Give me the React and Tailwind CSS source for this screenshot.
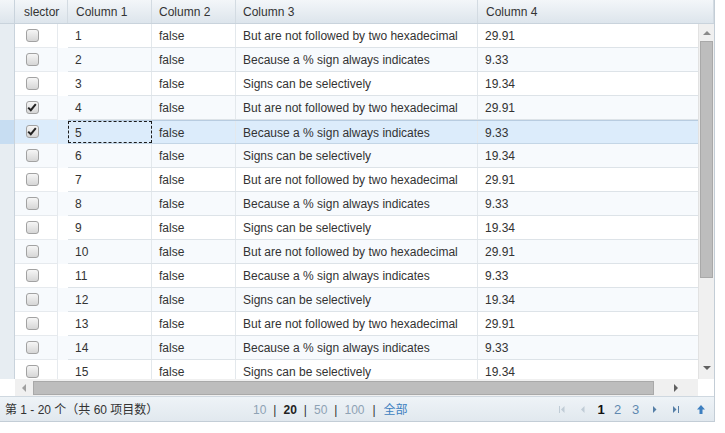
import React from "react";

const texts = [
  "But are not followed by two hexadecimal",
  "Because a % sign always indicates",
  "Signs can be selectively",
];
const nums = ["29.91", "9.33", "19.34"];

function Checkbox({ checked }) {
  return (
    <div className="w-[13px] h-[13px] rounded-[3px] border border-[#a2a2a2] bg-gradient-to-b from-[#f6f6f6] to-[#d6d6d6] flex items-center justify-center">
      {checked && (
        <svg width="10" height="9" viewBox="0 0 10 9">
          <path d="M1.2 4.6 L3.8 7.2 L8.8 1.2" fill="none" stroke="#222" strokeWidth="2" />
        </svg>
      )}
    </div>
  );
}

function Tri({ dir, color = "#7a7a7a", size = 4 }) {
  const s = size;
  let pts;
  if (dir === "up") pts = `0,${s} ${s},0 ${2 * s},${s}`;
  if (dir === "down") pts = `0,0 ${2 * s},0 ${s},${s}`;
  if (dir === "left") pts = `${s},0 ${s},${2 * s} 0,${s}`;
  if (dir === "right") pts = `0,0 0,${2 * s} ${s},${s}`;
  const w = dir === "up" || dir === "down" ? 2 * s : s;
  const h = dir === "up" || dir === "down" ? s : 2 * s;
  return (
    <svg width={w} height={h} viewBox={`0 0 ${w} ${h}`}>
      <polygon points={pts} fill={color} />
    </svg>
  );
}

export default function App() {
  const rows = Array.from({ length: 15 }, (_, i) => i + 1);
  return (
    <div
      className="w-[715px] h-[422px] bg-white text-[12px] text-[#333] flex flex-col border-r border-b border-[#c3cdd6] overflow-hidden"
      style={{ fontFamily: '"Liberation Sans", Arial, "Noto Sans CJK SC", sans-serif' }}
    >
      {/* header */}
      <div className="flex h-[24px] shrink-0 bg-gradient-to-b from-[#f3f6f9] to-[#dde5ec] border-b border-[#c9d3dc]">
        <div className="w-[15px] border-r border-[#c9d3dc]" />
        <div className="w-[53px] pl-[9px] pt-px flex items-center border-r border-[#d3dbe2]">slector</div>
        <div className="w-[84px] pl-[8px] pt-px flex items-center border-r border-[#d3dbe2]">Column 1</div>
        <div className="w-[84px] pl-[7px] pt-px flex items-center border-r border-[#d3dbe2]">Column 2</div>
        <div className="w-[242px] pl-[7px] pt-px flex items-center border-r border-[#d3dbe2]">Column 3</div>
        <div className="flex-1 pl-[8px] pt-px flex items-center border-r border-[#d3dbe2]">Column 4</div>
      </div>

      {/* body */}
      <div className="flex h-[355px] shrink-0 overflow-hidden">
        <div className="flex-1 flex flex-col overflow-hidden">
          {rows.map((n) => {
            const idx = (n - 1) % 3;
            const sel = n === 5;
            const even = n % 2 === 0;
            const rowBg = sel ? "bg-[#dcecfb]" : even ? "bg-[#f7fafd]" : "bg-white";
            return (
              <div key={n} className={`flex h-[24px] shrink-0 ${rowBg}`}>
                <div
                  className={`w-[15px] shrink-0 border-r border-[#c9d3dc] ${
                    sel ? "bg-[#c7ddf2]" : "bg-[#e7edf2]"
                  }`}
                />
                <div className="w-[43px] shrink-0 flex items-center justify-center pr-[8px] border-r border-b border-[#e6eaee]">
                  <Checkbox checked={n === 4 || n === 5} />
                </div>
                <div className="w-[10px] shrink-0" />
                <div
                  className={`flex flex-1 border-b ${
                    sel ? "border-[#c4d6e6] border-t border-t-[#b8cce0]" : "border-[#dde3e8]"
                  }`}
                >
                  <div
                    className={
                      sel
                        ? "w-[84px] shrink-0 pl-[6px] pt-px flex items-center border border-dashed border-[#1a1a1a]"
                        : "w-[84px] shrink-0 pl-[7px] pt-px flex items-center border-r border-[#e3e8ec]"
                    }
                  >
                    {n}
                  </div>
                  <div className="w-[84px] shrink-0 pl-[7px] pt-px flex items-center border-r border-[#e3e8ec]">false</div>
                  <div className="w-[242px] shrink-0 pl-[7px] pt-px flex items-center border-r border-[#e3e8ec]">
                    {texts[idx]}
                  </div>
                  <div className="flex-1 pl-[7px] pt-px flex items-center">{nums[idx]}</div>
                </div>
              </div>
            );
          })}
        </div>
        {/* vertical scrollbar */}
        <div className="w-[16px] shrink-0 bg-[#f0f0f0] border-l border-[#e2e2e2] flex flex-col items-center">
          <div className="h-[17px] flex items-center justify-center">
            <Tri dir="up" size={4} color="#8a8a8a" />
          </div>
          <div className="w-[13px] h-[237px] bg-[#bdbdbd] border border-[#a9a9a9]" />
          <div className="flex-1" />
          <div className="h-[17px] flex items-center justify-center mb-[3px]">
            <Tri dir="down" size={4} color="#606060" />
          </div>
        </div>
      </div>

      {/* horizontal scrollbar */}
      <div className="flex h-[17px] shrink-0">
        <div className="w-[15px] shrink-0 bg-white" />
        <div className="flex-1 bg-[#f0f0f0] flex items-center">
          <div className="w-[18px] flex items-center justify-center">
            <Tri dir="left" size={4} color="#a0a0a0" />
          </div>
          <div className="w-[621px] h-[14px] bg-[#bdbdbd] border border-[#a9a9a9]" />
          <div className="flex-1 flex items-center justify-center">
            <Tri dir="right" size={4} color="#606060" />
          </div>
        </div>
        <div className="w-[16px] shrink-0 bg-white" />
      </div>

      {/* footer */}
      <div className="flex items-center h-[26px] shrink-0 bg-gradient-to-b from-[#eef3f7] to-[#e1e8ee] border-t border-[#cfd8e0]">
        <div className="pl-[5px] pt-px w-[253px] shrink-0 text-[#333]">第 1 - 20 个（共 60 项目数）</div>
        <div className="flex items-center pt-px">
          <span className="text-[#8ea2b4]">10</span>
          <span className="mx-[7px] text-[#333]">|</span>
          <span className="font-bold text-[#222]">20</span>
          <span className="mx-[7px] text-[#333]">|</span>
          <span className="text-[#8ea2b4]">50</span>
          <span className="mx-[7px] text-[#333]">|</span>
          <span className="text-[#8ea2b4]">100</span>
          <span className="mx-[8px] text-[#333]">|</span>
          <span className="text-[#3d7fc0]">全部</span>
        </div>
        <div className="flex-1" />
        <div className="flex items-center pr-[3px] text-[13px]">
          <div className="w-[22px] flex items-center justify-center gap-[1px]">
            <div className="w-[1px] h-[7px] bg-[#c0ccd6]" />
            <Tri dir="left" size={3.5} color="#c0ccd6" />
          </div>
          <div className="w-[20px] flex items-center justify-center">
            <Tri dir="left" size={3.5} color="#c0ccd6" />
          </div>
          <div className="w-[16px] flex items-center justify-center font-bold text-[#111]">1</div>
          <div className="w-[17px] flex items-center justify-center text-[#5f88b0]">2</div>
          <div className="w-[19px] flex items-center justify-center text-[#5f88b0]">3</div>
          <div className="w-[20px] flex items-center justify-center">
            <Tri dir="right" size={3.5} color="#557ea6" />
          </div>
          <div className="w-[22px] flex items-center justify-center gap-[1px]">
            <Tri dir="right" size={3.5} color="#557ea6" />
            <div className="w-[1px] h-[7px] bg-[#557ea6]" />
          </div>
          <div className="w-[4px]" />
          <div className="w-[20px] flex items-center justify-center">
            <svg width="8" height="9" viewBox="0 0 8 9">
              <polygon points="4,0 8,4.5 5.5,4.5 5.5,9 2.5,9 2.5,4.5 0,4.5" fill="#3d7fc0" />
            </svg>
          </div>
        </div>
      </div>
    </div>
  );
}
